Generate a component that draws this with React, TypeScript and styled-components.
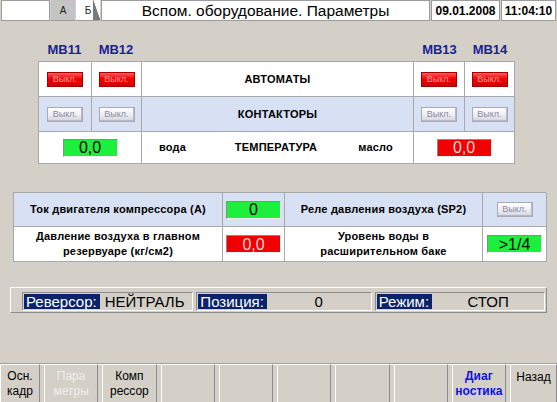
import React from 'react';
import styled, { createGlobalStyle } from 'styled-components';

const GlobalStyle = createGlobalStyle`
  html, body {
    margin: 0;
    padding: 0;
  }
  body {
    background: #d4d0c8;
    font-family: "Liberation Sans", Arial, sans-serif;
  }
`;

const Screen = styled.div`
  width: 557px;
  height: 402px;
  display: flex;
  flex-direction: column;
  background: #d4d0c8;
  overflow: hidden;
`;

/* ---------- top bar ---------- */

const TopBar = styled.div`
  display: flex;
  height: 21px;
  gap: 1px;
  padding: 0 1px;
`;

const Field = styled.div<{ $w?: number; $bold?: boolean; $size?: number }>`
  box-sizing: border-box;
  ${(p) => (p.$w ? `width: ${p.$w}px;` : 'flex: 1;')}
  background: #fff;
  border: 1px solid #9c9c9c;
  display: flex;
  align-items: center;
  justify-content: center;
  font-size: ${(p) => p.$size || 12}px;
  font-weight: ${(p) => (p.$bold ? 700 : 400)};
  color: #000;
  white-space: nowrap;
`;

const Tab = styled.div<{ $active?: boolean }>`
  position: relative;
  box-sizing: border-box;
  width: 24px;
  display: flex;
  align-items: center;
  justify-content: center;
  font-size: 10px;
  color: #222;
  background: ${(p) => (p.$active ? '#c4c4c4' : '#fff')};
  border-bottom: 1px solid #9c9c9c;
  ${(p) =>
    !p.$active &&
    `
    &::after {
      content: '';
      position: absolute;
      right: 0;
      top: 0;
      bottom: 0;
      width: 7px;
      background: linear-gradient(to bottom left, transparent 45%, #7a7a7a 50%);
    }
  `}
`;

/* ---------- MB block ---------- */

const Block = styled.div`
  margin: 21px 0 0 38px;
  width: 477px;
`;

const COLS = '53px 50px 1fr 51px 50px';

const HeadRow = styled.div`
  display: grid;
  grid-template-columns: ${COLS};
  height: 15px;
  margin-bottom: 4px;
  font-size: 13px;
  font-weight: 700;
  color: #1a1f94;
  line-height: 15px;
  text-align: center;
`;

const Grid = styled.div<{ $cols: string; $rows: string }>`
  display: grid;
  grid-template-columns: ${(p) => p.$cols};
  grid-template-rows: ${(p) => p.$rows};
  border-top: 1px solid #a8a8a8;
  border-left: 1px solid #a8a8a8;
  background: #fff;
`;

const Cell = styled.div<{ $bg?: string; $span?: string }>`
  display: flex;
  align-items: center;
  justify-content: center;
  text-align: center;
  background: ${(p) => p.$bg || '#fff'};
  border-right: 1px solid #a8a8a8;
  border-bottom: 1px solid #a8a8a8;
  ${(p) => (p.$span ? `grid-column: ${p.$span};` : '')}
  font-size: 11px;
  font-weight: 700;
  letter-spacing: 0.2px;
  color: #000;
  line-height: 15px;
`;

const TempCell = styled(Cell)`
  display: grid;
  grid-template-columns: 1fr auto 1fr;
  padding: 0 20px 0 17px;
`;

const Side = styled.span<{ $right?: boolean }>`
  text-align: ${(p) => (p.$right ? 'right' : 'left')};
`;

const SwitchButton = styled.div<{ $on?: boolean }>`
  box-sizing: border-box;
  width: 36px;
  height: 15px;
  display: flex;
  align-items: center;
  justify-content: center;
  font-size: 9px;
  font-weight: 400;
  letter-spacing: 0;
  border: 1px solid ${(p) => (p.$on ? '#a00000' : '#a9a9b9')};
  background: ${(p) =>
    p.$on
      ? 'linear-gradient(#ff5a5a, #f00000 45%, #d00000)'
      : 'linear-gradient(#ffffff, #ececf2 55%, #d4d4dc)'};
  color: ${(p) => (p.$on ? '#ff9c9c' : '#8a8a9c')};
  box-shadow: ${(p) => (p.$on ? 'none' : 'inset -1px -1px 0 #b8b8c4')};
`;

const Value = styled.div<{ $tone: 'green' | 'red' }>`
  box-sizing: border-box;
  width: 55px;
  height: 18px;
  display: flex;
  align-items: center;
  justify-content: center;
  font-size: 16px;
  font-weight: 400;
  letter-spacing: 0;
  background: ${(p) => (p.$tone === 'green' ? '#1df03c' : '#f00000')};
  color: ${(p) => (p.$tone === 'green' ? '#000' : '#ffd6d6')};
  border-top: 1px solid #8a8a8a;
  border-left: 1px solid #8a8a8a;
  border-right: 1px solid #f4f4f4;
  border-bottom: 1px solid #f4f4f4;
`;

/* ---------- compressor block ---------- */

const Block2 = styled.div`
  margin: 28px 0 0 13px;
  width: 533px;
`;

/* ---------- status strip ---------- */

const Strip = styled.div`
  box-sizing: border-box;
  margin: 25px 0 0 10px;
  width: 537px;
  height: 26px;
  display: flex;
  align-items: flex-end;
  gap: 3px;
  padding: 0 1px 1px 11px;
  border-top: 1px solid #ffffff;
  border-left: 1px solid #ffffff;
  border-right: 1px solid #8c8c8c;
  border-bottom: 1px solid #8c8c8c;
`;

const StatusGroup = styled.div<{ $w: number }>`
  box-sizing: border-box;
  width: ${(p) => p.$w}px;
  height: 19px;
  display: flex;
  align-items: center;
  padding: 0 0 0 1px;
  border-top: 1px solid #8c8c8c;
  border-left: 1px solid #8c8c8c;
  border-right: 1px solid #ffffff;
  border-bottom: 1px solid #ffffff;
`;

const StatusLabel = styled.span`
  background: #0a246a;
  color: #fff;
  font-size: 15px;
  line-height: 15px;
  padding: 0 3px 0 2px;
  white-space: nowrap;
`;

const StatusValue = styled.span<{ $left?: boolean }>`
  flex: 1;
  font-size: 15px;
  color: #000;
  text-align: ${(p) => (p.$left ? 'left' : 'center')};
  padding-left: ${(p) => (p.$left ? '5px' : '0')};
  white-space: nowrap;
`;

/* ---------- bottom navigation ---------- */

const Nav = styled.div`
  margin-top: auto;
  height: 38px;
  display: grid;
  grid-template-columns: 40px repeat(8, 1fr) 47px;
  gap: 4px;
  border-top: 1px solid #a0a0a0;
  box-shadow: inset 0 1px 0 #fff;
`;

const NavButton = styled.div<{ $tone?: 'muted' | 'accent'; $top?: boolean }>`
  box-sizing: border-box;
  display: flex;
  align-items: ${(p) => (p.$top ? 'flex-start' : 'center')};
  justify-content: center;
  padding-top: ${(p) => (p.$top ? '5px' : '0')};
  text-align: center;
  font-size: 12px;
  line-height: 15px;
  border-left: 1px solid #ffffff;
  border-top: 1px solid #ffffff;
  border-right: 1px solid #8c8c8c;
  font-weight: ${(p) => (p.$tone === 'accent' ? 700 : 400)};
  color: ${(p) =>
    p.$tone === 'accent' ? '#1010e8' : p.$tone === 'muted' ? '#efede8' : '#000'};
`;

const navItems: { label: string[]; tone?: 'muted' | 'accent'; top?: boolean }[] = [
  { label: ['Осн.', 'кадр'] },
  { label: ['Пара', 'метры'], tone: 'muted' },
  { label: ['Комп', 'рессор'] },
  { label: [] },
  { label: [] },
  { label: [] },
  { label: [] },
  { label: [] },
  { label: ['Диаг', 'ностика'], tone: 'accent' },
  { label: ['Назад'], top: true },
];

const BLUE = '#d8e0f3';

const App = (): React.ReactElement => {
  return (
    <Screen>
      <GlobalStyle />
      <TopBar>
        <Field $w={49} />
        <Tab $active>А</Tab>
        <Tab>Б</Tab>
        <Field $size={15.5}>Вспом. оборудование. Параметры</Field>
        <Field $w={69} $bold>
          09.01.2008
        </Field>
        <Field $w={55} $bold>
          11:04:10
        </Field>
      </TopBar>

      <Block>
        <HeadRow>
          <span>MB11</span>
          <span>MB12</span>
          <span />
          <span>MB13</span>
          <span>MB14</span>
        </HeadRow>
        <Grid $cols={COLS} $rows="35px 35px 32px">
          <Cell>
            <SwitchButton $on>Выкл.</SwitchButton>
          </Cell>
          <Cell>
            <SwitchButton $on>Выкл.</SwitchButton>
          </Cell>
          <Cell>АВТОМАТЫ</Cell>
          <Cell>
            <SwitchButton $on>Выкл.</SwitchButton>
          </Cell>
          <Cell>
            <SwitchButton $on>Выкл.</SwitchButton>
          </Cell>

          <Cell $bg={BLUE}>
            <SwitchButton>Выкл.</SwitchButton>
          </Cell>
          <Cell $bg={BLUE}>
            <SwitchButton>Выкл.</SwitchButton>
          </Cell>
          <Cell $bg={BLUE}>КОНТАКТОРЫ</Cell>
          <Cell $bg={BLUE}>
            <SwitchButton>Выкл.</SwitchButton>
          </Cell>
          <Cell $bg={BLUE}>
            <SwitchButton>Выкл.</SwitchButton>
          </Cell>

          <Cell $span="1 / 3">
            <Value $tone="green">0,0</Value>
          </Cell>
          <TempCell>
            <Side>вода</Side>
            <span>ТЕМПЕРАТУРА</span>
            <Side $right>масло</Side>
          </TempCell>
          <Cell $span="4 / 6">
            <Value $tone="red">0,0</Value>
          </Cell>
        </Grid>
      </Block>

      <Block2>
        <Grid $cols="209px 62px 198px 64px" $rows="34px 35px">
          <Cell $bg={BLUE}>Ток двигателя компрессора (А)</Cell>
          <Cell $bg={BLUE}>
            <Value $tone="green">0</Value>
          </Cell>
          <Cell $bg={BLUE}>Реле давления воздуха (SP2)</Cell>
          <Cell $bg={BLUE}>
            <SwitchButton>Выкл.</SwitchButton>
          </Cell>

          <Cell>
            Давление воздуха в главном
            <br />
            резервуаре (кг/см2)
          </Cell>
          <Cell>
            <Value $tone="red">0,0</Value>
          </Cell>
          <Cell>
            Уровень воды в
            <br />
            расширительном баке
          </Cell>
          <Cell>
            <Value $tone="green">&gt;1/4</Value>
          </Cell>
        </Grid>
      </Block2>

      <Strip>
        <StatusGroup $w={172}>
          <StatusLabel>Реверсор:</StatusLabel>
          <StatusValue $left>НЕЙТРАЛЬ</StatusValue>
        </StatusGroup>
        <StatusGroup $w={176}>
          <StatusLabel>Позиция:</StatusLabel>
          <StatusValue>0</StatusValue>
        </StatusGroup>
        <StatusGroup $w={171}>
          <StatusLabel>Режим:</StatusLabel>
          <StatusValue>СТОП</StatusValue>
        </StatusGroup>
      </Strip>

      <Nav>
        {navItems.map((item, i) => (
          <NavButton key={i} $tone={item.tone} $top={item.top}>
            <div>
              {item.label.map((line) => (
                <div key={line}>{line}</div>
              ))}
            </div>
          </NavButton>
        ))}
      </Nav>
    </Screen>
  );
};

export default App;
